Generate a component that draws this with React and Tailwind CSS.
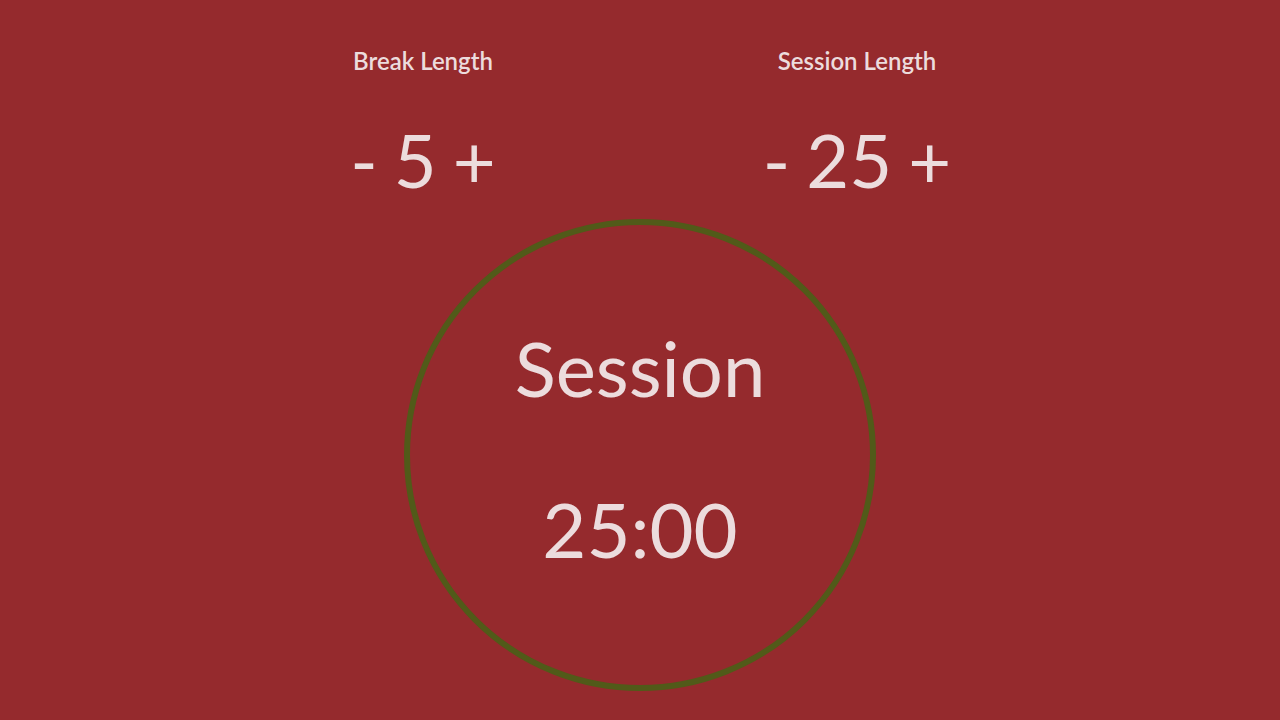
import React, { useState } from "react";

const TEXT = "text-[#ecdcdd]";

const LengthControl = ({ label, value, onDec, onInc }) => (
  <div className="flex flex-col items-center">
    <h2 className="text-[24px] leading-[1.2] font-semibold">{label}</h2>
    <div className="mt-[40px] flex items-center text-[74px] leading-[1.2]">
      <button onClick={onDec} className="cursor-pointer">-</button>
      <span className="mx-[16px]">{value}</span>
      <button onClick={onInc} className="cursor-pointer">+</button>
    </div>
  </div>
);

export default function App() {
  const [breakLen, setBreakLen] = useState(5);
  const [sessionLen, setSessionLen] = useState(25);

  return (
    <div
      className={"min-h-screen w-full bg-[#952a2d] flex flex-col items-center pt-[47px] " + TEXT}
      style={{ fontFamily: "Lato, 'Open Sans', sans-serif" }}
    >
      <div className="grid grid-cols-2 w-[868px]">
        <LengthControl
          label="Break Length"
          value={breakLen}
          onDec={() => setBreakLen((v) => Math.max(1, v - 1))}
          onInc={() => setBreakLen((v) => Math.min(60, v + 1))}
        />
        <LengthControl
          label="Session Length"
          value={sessionLen}
          onDec={() => setSessionLen((v) => Math.max(1, v - 1))}
          onInc={() => setSessionLen((v) => Math.min(60, v + 1))}
        />
      </div>

      {/* timer ring */}
      <div className="mt-[14px] w-[472px] h-[472px] rounded-full border-[6px] border-[#515a19] flex flex-col items-center pt-[97px]">
        <div className="text-[76px] leading-[1.2]">Session</div>
        <div className="mt-[70px] text-[76px] leading-[1.2]">
          {String(sessionLen).padStart(2, "0")}:00
        </div>
      </div>
    </div>
  );
}
